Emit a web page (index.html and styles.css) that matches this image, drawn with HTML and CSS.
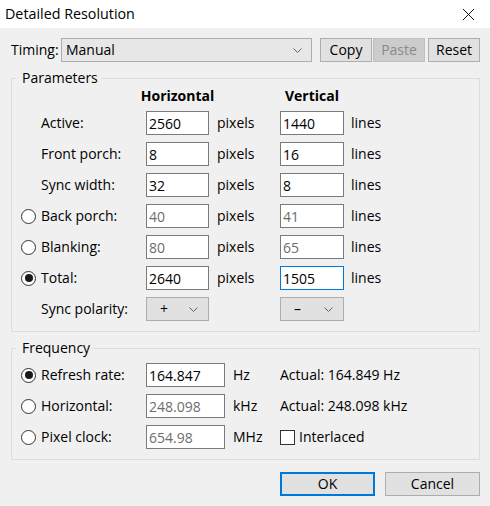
FILE: index.html
```html
<!DOCTYPE html>
<html lang="en">
<head>
<meta charset="utf-8">
<title>Detailed Resolution</title>
<link rel="stylesheet" href="styles.css">
</head>
<body>
<div class="window">
  <div class="titlebar">
    <span class="title">Detailed Resolution</span>
    <svg class="close" viewBox="0 0 14 14" aria-hidden="true"><path d="M1 1 L13 13 M13 1 L1 13" stroke="#000" stroke-width="1" fill="none"/></svg>
  </div>
  <div class="content">
    <div class="timing-row">
      <span class="timing-label">Timing:</span>
      <div class="combo timing-combo"><span>Manual</span><svg class="chev" viewBox="0 0 9 5" aria-hidden="true"><path d="M0.5 0.5 L4.5 4.5 L8.5 0.5" stroke="#606060" fill="none"/></svg></div>
      <button class="btn">Copy</button>
      <button class="btn paste">Paste</button>
      <button class="btn">Reset</button>
    </div>

    <fieldset class="group params">
      <legend>Parameters</legend>
      <div class="pgrid">
        <span></span><span></span><div class="head">Horizontal</div><span></span><div class="head v">Vertical</div><span></span>

        <span></span><span class="lbl">Active:</span><input class="field" value="2560" readonly><span>pixels</span><input class="field v" value="1440" readonly><span>lines</span>

        <span></span><span class="lbl">Front porch:</span><input class="field" value="8" readonly><span>pixels</span><input class="field v" value="16" readonly><span>lines</span>

        <span></span><span class="lbl">Sync width:</span><input class="field" value="32" readonly><span>pixels</span><input class="field v" value="8" readonly><span>lines</span>

        <span class="radio"></span><span class="lbl">Back porch:</span><input class="field dis" value="40" readonly><span>pixels</span><input class="field v dis" value="41" readonly><span>lines</span>

        <span class="radio"></span><span class="lbl">Blanking:</span><input class="field dis" value="80" readonly><span>pixels</span><input class="field v dis" value="65" readonly><span>lines</span>

        <span class="radio checked"></span><span class="lbl">Total:</span><input class="field" value="2640" readonly><span>pixels</span><input class="field v focus" value="1505" readonly><span>lines</span>

        <span></span><span class="lbl">Sync polarity:</span>
        <div class="combo pol"><span>+</span><svg class="chev" viewBox="0 0 9 5" aria-hidden="true"><path d="M0.5 0.5 L4.5 4.5 L8.5 0.5" stroke="#606060" fill="none"/></svg></div>
        <span></span>
        <div class="combo pol v"><span>–</span><svg class="chev" viewBox="0 0 9 5" aria-hidden="true"><path d="M0.5 0.5 L4.5 4.5 L8.5 0.5" stroke="#606060" fill="none"/></svg></div>
        <span></span>
      </div>
    </fieldset>

    <fieldset class="group freq">
      <legend>Frequency</legend>
      <div class="fgrid">
        <span class="radio checked"></span><span class="lbl">Refresh rate:</span><input class="field f" value="164.847" readonly><span>Hz</span><span>Actual: 164.849 Hz</span>

        <span class="radio"></span><span class="lbl">Horizontal:</span><input class="field f dis" value="248.098" readonly><span>kHz</span><span>Actual: 248.098 kHz</span>

        <span class="radio"></span><span class="lbl">Pixel clock:</span><input class="field f dis" value="654.98" readonly><span>MHz</span><span class="check-wrap"><span class="checkbox"></span><span>Interlaced</span></span>
      </div>
    </fieldset>

    <div class="dialog-buttons">
      <button class="btn big default">OK</button>
      <button class="btn big">Cancel</button>
    </div>
  </div>
</div>
</body>
</html>
```

FILE: styles.css
```css
* {
  box-sizing: border-box;
}

html,
body {
  margin: 0;
  padding: 0;
}

body {
  width: 490px;
  height: 506px;
  overflow: hidden;
  background: #f0f0f0;
  font-family: "Open Sans", "Noto Sans", sans-serif;
  font-size: 14px;
  line-height: 20px;
  color: #000;
}

.titlebar {
  height: 28px;
  background: #fff;
  display: flex;
  align-items: center;
  justify-content: space-between;
  padding: 0 15px 0 5px;
}

.title {
  font-size: 14.3px;
}

.close {
  width: 13px;
  height: 13px;
}

.content {
  padding: 10px 10px 0 11px;
}

.timing-row {
  display: flex;
  align-items: center;
  height: 24px;
}

.timing-label {
  width: 50px;
}

.combo {
  display: flex;
  align-items: center;
  justify-content: space-between;
  height: 24px;
  border: 1px solid #adadad;
  background: #e7e7e7;
  padding: 0 9px 0 4px;
}

.timing-combo {
  width: 251px;
  margin-right: 8px;
}

.chev {
  width: 9px;
  height: 5px;
}

.btn {
  height: 24px;
  width: 52px;
  border: 1px solid #adadad;
  background: #e1e1e1;
  font: inherit;
  color: #000;
  padding: 0;
  line-height: 20px;
}

.paste {
  margin: 0 3px 0 1px;
  background: #cccccc;
  border-color: #bfbfbf;
  color: #8a8a8a;
}

.group {
  margin: 6px 0 0;
  padding: 0 0 10px 9px;
  border: 1px solid #dcdcdc;
  min-width: 0;
}

.group legend {
  padding: 0 3px 0 6px;
  margin-left: -5px;
  line-height: 20px;
}

.pgrid {
  display: grid;
  grid-template-columns: 20px 105px 71px 63px 71px auto;
  grid-template-rows: 16px repeat(7, 24px);
  row-gap: 7px;
  align-items: center;
}

.head {
  width: 63px;
  display: flex;
  justify-content: center;
  font-weight: bold;
  line-height: 16px;
  white-space: nowrap;
}

.head.v {
  width: 64px;
}

.lbl {
  white-space: nowrap;
}

.field {
  width: 63px;
  height: 24px;
  border: 1px solid #7a7a7a;
  background: #fff;
  padding: 0 2px;
  margin: 0;
  font: inherit;
  color: #000;
  outline: none;
  border-radius: 0;
}

.field.v {
  width: 64px;
}

.field.f {
  width: 79px;
}

.field.dis {
  color: #6d6d6d;
}

.field.focus {
  border-color: #0078d7;
}

.pol {
  width: 63px;
  background: #e1e1e1;
  padding: 0 10px 0 13px;
}

.pol.v {
  width: 64px;
}

.radio {
  width: 15px;
  height: 15px;
  border: 1px solid #333;
  border-radius: 50%;
  background: #fff;
  display: flex;
  align-items: center;
  justify-content: center;
}

.radio.checked::after {
  content: "";
  width: 8px;
  height: 8px;
  border-radius: 50%;
  background: #1a1a1a;
}

.fgrid {
  display: grid;
  grid-template-columns: 20px 105px 87px 47px auto;
  grid-template-rows: repeat(3, 24px);
  row-gap: 7px;
  align-items: center;
  padding-top: 5px;
}

.check-wrap {
  display: flex;
  align-items: center;
  gap: 4px;
}

.checkbox {
  width: 15px;
  height: 15px;
  border: 1px solid #333;
  background: #fff;
}

.dialog-buttons {
  display: flex;
  justify-content: flex-end;
  gap: 10px;
  margin-top: 12px;
}

.btn.big {
  width: 95px;
}

.btn.default {
  border: 2px solid #0078d7;
}
```
